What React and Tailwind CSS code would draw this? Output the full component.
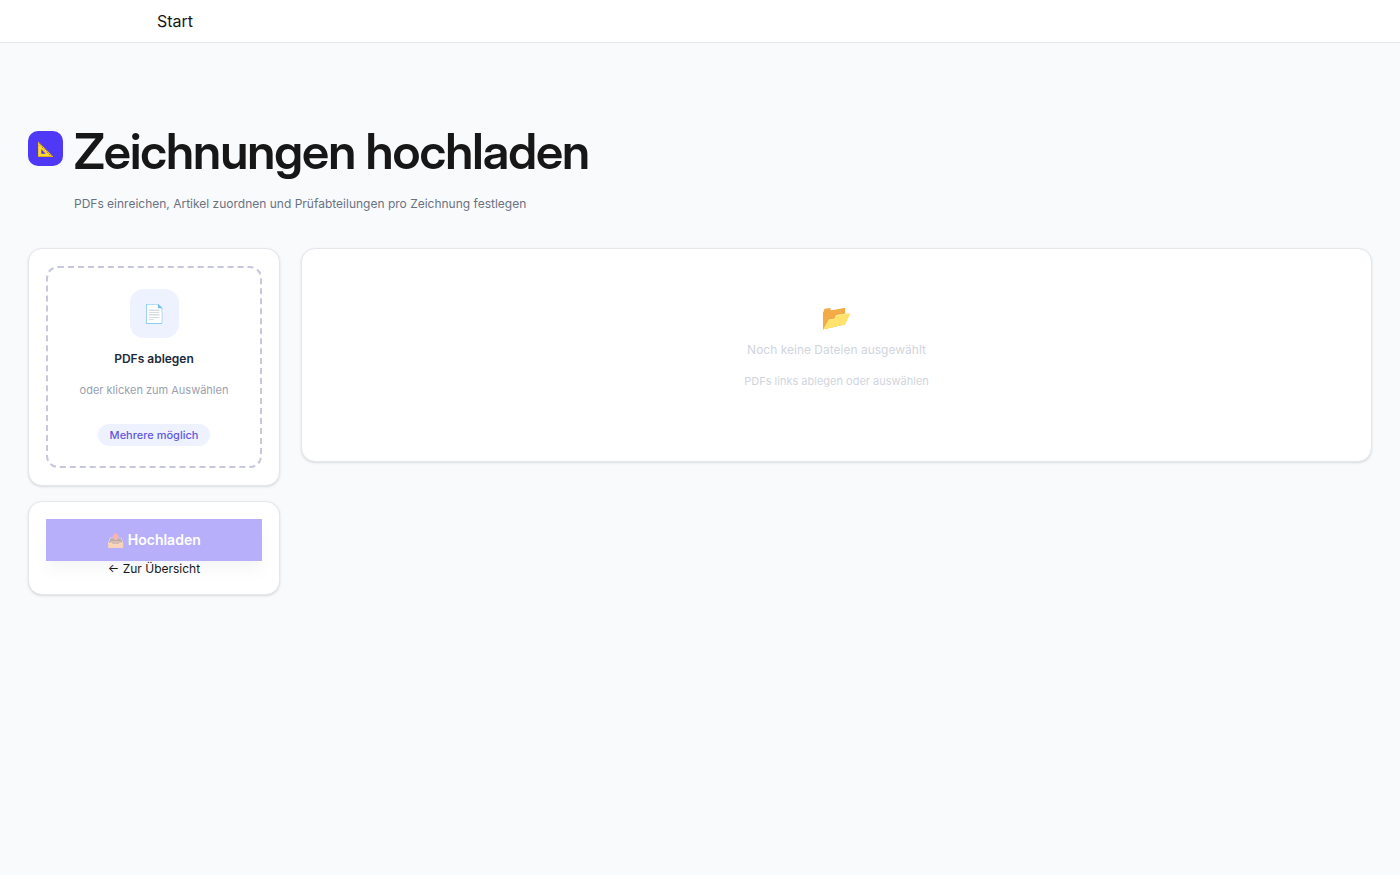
import { useRef, useState } from "react";

function Card({ children, className = "" }) {
    return (
        <div className={`rounded-[14px] border border-gray-200 bg-white shadow-sm ${className}`}>
            {children}
        </div>
    );
}

function Header() {
    return (
        <header className="border-b border-gray-200 bg-white">
            <nav className="mx-auto flex h-[42px] max-w-[1120px] items-center px-[17px]">
                <a href="#" className="text-base text-[#171717]">Start</a>
            </nav>
        </header>
    );
}

function DropZone({ onFiles }) {
    return (
        <label
            htmlFor="pdfs"
            className="flex h-[202px] cursor-pointer flex-col items-center rounded-xl border-2 border-dashed border-[#c7c8dc] pt-[21px]"
        >
            <span className="flex size-[49px] items-center justify-center rounded-[14px] bg-[#eef2ff] text-lg leading-none">
                📄
            </span>
            <span className="mt-3 text-[12px] leading-[18px] font-semibold text-gray-800">PDFs ablegen</span>
            <span className="mt-[14px] text-[11px] leading-4 text-gray-400">oder klicken zum Auswählen</span>
            <span className="mt-[26px] rounded-full bg-[#eef2ff] px-3 py-[2px] text-[11px] leading-[18px] font-medium text-[#6258dd]">
                Mehrere möglich
            </span>
            <input id="pdfs" type="file" accept="application/pdf" multiple className="sr-only" onChange={onFiles} />
        </label>
    );
}

export default function App() {
    const [files, setFiles] = useState([]);
    const formRef = useRef(null);

    const addFiles = (e) => {
        const picked = Array.from(e.target.files);
        setFiles((prev) => [...prev, ...picked]);
    };

    return (
        <div className="min-h-screen bg-[#f9fafc] font-['Inter',sans-serif] text-[#171717]">
            <Header />
            <main className="px-7 pt-[81px] pb-7">
                <div className="flex items-start gap-[11px]">
                    <div className="mt-[7px] flex size-[35px] items-center justify-center rounded-[10px] bg-[#4f39f6] text-sm leading-none">
                        📐
                    </div>
                    <div>
                        <h1 className="font-['Inter_Display','Inter',sans-serif] text-[49px] leading-[56px] font-semibold tracking-[-0.02em]">
                            Zeichnungen hochladen
                        </h1>
                        <p className="mt-[15px] text-[12px] leading-[18px] text-gray-500">
                            PDFs einreichen, Artikel zuordnen und Prüfabteilungen pro Zeichnung festlegen
                        </p>
                    </div>
                </div>

                {/* Upload links, Dateiliste rechts */}
                <form ref={formRef} className="mt-[35px] grid grid-cols-[252px_1fr] items-start gap-[21px]">
                    <div className="flex flex-col gap-[15px]">
                        <Card className="p-[17px]">
                            <DropZone onFiles={addFiles} />
                        </Card>
                        <Card className="p-[17px]">
                            <button
                                type="submit"
                                disabled={files.length === 0}
                                className="h-[42px] w-full bg-[#4f39f6] text-sm font-semibold text-white shadow-lg shadow-gray-200 disabled:opacity-40"
                            >
                                📤 Hochladen
                            </button>
                            <a href="#" className="relative block text-center text-[12px] leading-4">← Zur Übersicht</a>
                        </Card>
                    </div>

                    <Card className="min-h-[214px] px-4 pt-[52px] text-center">
                        {files.length === 0 ? (
                            <>
                                <div className="text-[25px] leading-[32px]">📂</div>
                                <p className="mt-2 text-[12px] leading-[18px] text-gray-300">Noch keine Dateien ausgewählt</p>
                                <p className="mt-[14px] text-[11px] leading-4 text-gray-300">PDFs links ablegen oder auswählen</p>
                            </>
                        ) : (
                            <ul className="text-[12px] leading-6">
                                {files.map((file, index) => (
                                    <li key={index}>{file.name}</li>
                                ))}
                            </ul>
                        )}
                    </Card>
                </form>
            </main>
        </div>
    );
}
